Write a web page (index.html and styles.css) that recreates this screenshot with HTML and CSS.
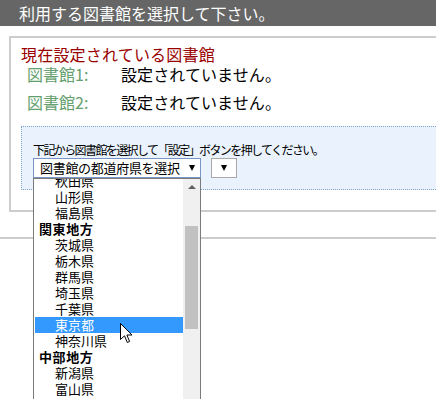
FILE: index.html
```html
<!DOCTYPE html>
<html lang="ja">
<head>
  <meta charset="UTF-8" />
  <title>図書館の選択</title>
  <link rel="stylesheet" href="styles.css">
</head>
<body>
  <!-- Header -->
  <div class="header">利用する図書館を選択して下さい。</div>

  <!-- Current libraries -->
  <div class="panel">
    <div class="panel-title">現在設定されている図書館</div>
    <div class="lib-row">
      <span class="lib-label">図書館1:</span>
      <span class="lib-value">設定されていません。</span>
    </div>
    <div class="lib-row">
      <span class="lib-label">図書館2:</span>
      <span class="lib-value">設定されていません。</span>
    </div>

    <!-- Chooser -->
    <div class="chooser">
      <div class="chooser-note">下記から図書館を選択して「設定」ボタンを押してください。</div>
      <div class="chooser-controls">
        <div class="select select-pref">
          <span class="select-text">図書館の都道府県を選択</span>
          <span class="arrow"></span>

          <!-- open list -->
          <div class="dropdown">
            <div class="options">
              <div class="options-inner">
                <div class="option">秋田県</div>
                <div class="option">山形県</div>
                <div class="option">福島県</div>
                <div class="group">関東地方</div>
                <div class="option">茨城県</div>
                <div class="option">栃木県</div>
                <div class="option">群馬県</div>
                <div class="option">埼玉県</div>
                <div class="option">千葉県</div>
                <div class="option selected">東京都</div>
                <div class="option">神奈川県</div>
                <div class="group">中部地方</div>
                <div class="option">新潟県</div>
                <div class="option">富山県</div>
                <div class="option">石川県</div>
              </div>
            </div>
            <div class="scrollbar">
              <span class="scroll-up"></span>
              <span class="scroll-thumb"></span>
            </div>
          </div>
        </div>
        <div class="select select-lib">
          <span class="arrow"></span>
        </div>
      </div>
    </div>
  </div>

  <div class="rule"></div>

  <!-- mouse pointer -->
  <svg class="cursor" width="13" height="21" viewBox="0 0 13 21">
    <path d="M0.5 0.5 L0.5 16.5 L4.5 12.8 L7.3 19.5 L9.6 18.5 L6.9 12 L12 12 Z" fill="#fff" stroke="#000" stroke-width="1" stroke-linejoin="round"/>
  </svg>
</body>
</html>
```

FILE: styles.css
```css
/* Base */
* {
  margin: 0;
  padding: 0;
  box-sizing: border-box;
}
html, body {
  height: 100%;
  overflow: hidden;
  background: #fff;
  font-family: 'Noto Sans CJK JP', 'Noto Sans', sans-serif;
  color: #000;
}
/* Header bar */
.header {
  height: 26px;
  line-height: 26px;
  padding-left: 19px;
  background: #666;
  color: #fff;
  font-size: 16px;
}
/* Panel with current libraries (runs off the right edge, so no right border) */
.panel {
  position: relative;
  margin: 10px 0 0 9px;
  border: 2px solid #ccc;
  border-right: none;
  padding: 6px 0 20px 0;
}
.panel-title {
  padding-left: 10px;
  font-size: 16px;
  line-height: 20px;
  color: #990000;
  letter-spacing: 0.2px;
}
.lib-row {
  display: flex;
  padding-left: 16px;
  font-size: 16px;
  line-height: 20px;
}
.lib-row + .lib-row {
  margin-top: 8px;
}
.lib-label {
  width: 94px;
  color: #64a06e;
}
.lib-value {
  letter-spacing: 0.1px;
}
/* Chooser box */
.chooser {
  margin: 14px 0 0 10px;
  border: 1px dotted #7fa3c8;
  border-right: none;
  background: #eaf3fd;
  padding: 16px 0 11px 11px;
}
.chooser-note {
  font-size: 12px;
  line-height: 14px;
  letter-spacing: -1.6px;
  margin-bottom: 1px;
}
.chooser-controls {
  display: flex;
  gap: 10px;
}
.select {
  position: relative;
  display: flex;
  align-items: center;
  height: 20px;
  background: #fff;
  border: 1px solid #a9a9a9;
}
.select-pref {
  width: 168px;
  padding: 0 5px 0 6px;
  border-color: #7895c6;
}
.select-text {
  flex: 1;
  font-size: 13px;
  line-height: 18px;
  letter-spacing: -0.3px;
}
.select-lib {
  width: 26px;
  justify-content: center;
}
.arrow {
  width: 0;
  height: 0;
  border-left: 3.5px solid transparent;
  border-right: 3.5px solid transparent;
  border-top: 6px solid #000;
}
/* The open list */
.dropdown {
  position: absolute;
  top: 19px;
  left: -1px;
  width: 168px;
  height: 240px;
  display: flex;
  background: #fff;
  border: 1px solid #7a7a7a;
  z-index: 10;
}
.options {
  flex: 1;
  overflow: hidden;
  padding-left: 1px;
}
.options-inner {
  margin-top: -6px;
}
.option, .group {
  height: 16px;
  line-height: 16px;
  font-size: 13px;
}
.option {
  padding-left: 20px;
}
.group {
  padding-left: 4px;
  font-weight: 700;
  letter-spacing: 0.6px;
}
.option.selected {
  background: #3399ff;
  color: #fff;
}
.scrollbar {
  width: 17px;
  background: #f0f0f0;
  display: flex;
  flex-direction: column;
  align-items: center;
}
.scroll-up {
  margin-top: 6px;
  width: 0;
  height: 0;
  border-left: 4px solid transparent;
  border-right: 4px solid transparent;
  border-bottom: 4px solid #606060;
}
.scroll-thumb {
  margin-top: 37px;
  width: 13px;
  height: 103px;
  background: #c1c1c1;
}
/* Lower rule */
.rule {
  margin-top: 25px;
  height: 2px;
  background: #ccc;
}
/* Mouse pointer */
.cursor {
  position: absolute;
  left: 120px;
  top: 323px;
  z-index: 20;
}
```
